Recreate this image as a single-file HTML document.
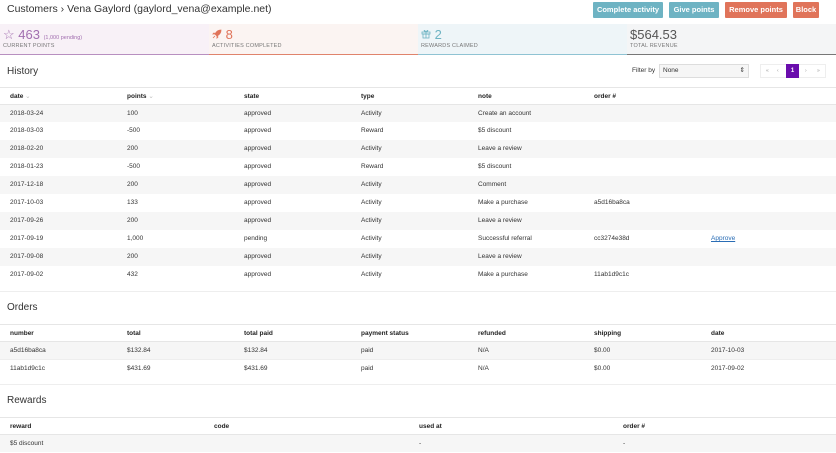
<!DOCTYPE html>
<html><head><meta charset="utf-8"><style>
*{box-sizing:border-box;margin:0;padding:0}
body{width:836px;height:452px;overflow:hidden;background:#fff;font-family:"Liberation Sans",sans-serif;color:#333;position:relative}
.abs{position:absolute}
.title{left:7px;top:3px;font-size:10.5px;color:#333}
.btn{position:absolute;top:2px;height:16px;font-size:7.5px;color:#fff;text-align:center;line-height:16px;font-weight:bold;border-radius:1px}
.teal{background:#6eb3c3}.red{background:#e0745a}
.stat{position:absolute;top:24px;height:31px;width:209px;padding-left:3px}
.stat .v{font-size:13px;margin-top:3px;height:15px;line-height:15px}
.stat .l{font-size:5.5px;color:#777;letter-spacing:.2px;margin-top:1px}
h2{position:absolute;left:7px;font-size:10px;font-weight:normal;color:#333}
.row{position:absolute;left:0;width:836px;height:18px;font-size:6.5px;line-height:18px}
.row span{position:absolute}
.hd{border-top:1px solid #e6e6e6;font-weight:bold;color:#222}
.g{background:#f6f6f6}
.sep{position:absolute;left:0;width:836px;border-top:1px solid #eee}
</style></head><body>
<div class="abs title">Customers › Vena Gaylord (gaylord_vena@example.net)</div>
<div class="btn teal" style="left:593px;width:70px">Complete activity</div>
<div class="btn teal" style="left:669px;width:50px">Give points</div>
<div class="btn red" style="left:725px;width:62px">Remove points</div>
<div class="btn red" style="left:793px;width:26px">Block</div>

<div class="stat" style="left:0;background:#f8f1f7;border-bottom:1px solid #b88fc0"><div class="v" style="color:#a26fb0">☆ 463 <span style="font-size:5.5px">(1,000 pending)</span></div><div class="l">CURRENT POINTS</div></div>
<div class="stat" style="left:209px;background:#fbf4f2;border-bottom:1px solid #e0836c"><div class="v" style="color:#e0745a"><svg width="10" height="10" viewBox="0 0 10 10"><path d="M9 1C6 1 4 3 3 5L5 7C7 6 9 4 9 1ZM3 5L1 5L2 4ZM5 7L5 9L6 8ZM3 7L1 9" fill="#e0745a" stroke="#e0745a" stroke-width=".8"/></svg> 8</div><div class="l">ACTIVITIES COMPLETED</div></div>
<div class="stat" style="left:418px;background:#eef5f8;border-bottom:1px solid #8fc3d3"><div class="v" style="color:#6eb3c3"><svg width="10" height="10" viewBox="0 0 10 10" fill="none" stroke="#6eb3c3" stroke-width=".8"><rect x="1" y="3" width="8" height="2"/><rect x="2" y="5" width="6" height="4"/><path d="M5 3V9M5 3C3 0 2 2 5 3C8 2 7 0 5 3"/></svg> 2</div><div class="l">REWARDS CLAIMED</div></div>
<div class="stat" style="left:627px;background:#f4f5f6;border-bottom:1px solid #777"><div class="v" style="color:#555">$564.53</div><div class="l">TOTAL REVENUE</div></div>

<h2 style="top:66px">History</h2>
<div class="abs" style="left:632px;top:67px;font-size:6.5px">Filter by</div>
<div class="abs" style="left:659px;top:64px;width:90px;height:14px;border:1px solid #ddd;background:#f6f6f6;font-size:6.5px;line-height:12px;padding-left:3px">None<span style="position:absolute;right:3px">⇕</span></div>
<div class="abs" style="left:760px;top:64px;width:66px;height:14px;border:1px solid #eee;font-size:5px;color:#999;line-height:13px">
<span class="abs" style="left:5px">«</span><span class="abs" style="left:16px">‹</span><span class="abs" style="left:25px;width:13px;height:14px;top:-1px;background:#6a0dad;color:#fff;text-align:center;font-size:6px;line-height:14px;font-weight:bold">1</span><span class="abs" style="left:44px">›</span><span class="abs" style="left:56px">»</span></div>

<div class="row hd" style="top:87px"><span style="left:10px">date <b style="color:#bbb;font-weight:normal">⌄</b></span><span style="left:127px">points <b style="color:#bbb;font-weight:normal">⌄</b></span><span style="left:244px">state</span><span style="left:361px">type</span><span style="left:478px">note</span><span style="left:594px">order #</span></div>
<div class="row g" style="top:104px;border-top:1px solid #e6e6e6"><span style="left:10px">2018-03-24</span><span style="left:127px">100</span><span style="left:244px">approved</span><span style="left:361px">Activity</span><span style="left:478px">Create an account</span></div>
<div class="row" style="top:122px"><span style="left:10px">2018-03-03</span><span style="left:127px">-500</span><span style="left:244px">approved</span><span style="left:361px">Reward</span><span style="left:478px">$5 discount</span></div>
<div class="row g" style="top:140px"><span style="left:10px">2018-02-20</span><span style="left:127px">200</span><span style="left:244px">approved</span><span style="left:361px">Activity</span><span style="left:478px">Leave a review</span></div>
<div class="row" style="top:158px"><span style="left:10px">2018-01-23</span><span style="left:127px">-500</span><span style="left:244px">approved</span><span style="left:361px">Reward</span><span style="left:478px">$5 discount</span></div>
<div class="row g" style="top:176px"><span style="left:10px">2017-12-18</span><span style="left:127px">200</span><span style="left:244px">approved</span><span style="left:361px">Activity</span><span style="left:478px">Comment</span></div>
<div class="row" style="top:194px"><span style="left:10px">2017-10-03</span><span style="left:127px">133</span><span style="left:244px">approved</span><span style="left:361px">Activity</span><span style="left:478px">Make a purchase</span><span style="left:594px">a5d16ba8ca</span></div>
<div class="row g" style="top:212px"><span style="left:10px">2017-09-26</span><span style="left:127px">200</span><span style="left:244px">approved</span><span style="left:361px">Activity</span><span style="left:478px">Leave a review</span></div>
<div class="row" style="top:230px"><span style="left:10px">2017-09-19</span><span style="left:127px">1,000</span><span style="left:244px">pending</span><span style="left:361px">Activity</span><span style="left:478px">Successful referral</span><span style="left:594px">cc3274e38d</span><span style="left:711px;color:#2a6db5;text-decoration:underline">Approve</span></div>
<div class="row g" style="top:248px"><span style="left:10px">2017-09-08</span><span style="left:127px">200</span><span style="left:244px">approved</span><span style="left:361px">Activity</span><span style="left:478px">Leave a review</span></div>
<div class="row" style="top:266px"><span style="left:10px">2017-09-02</span><span style="left:127px">432</span><span style="left:244px">approved</span><span style="left:361px">Activity</span><span style="left:478px">Make a purchase</span><span style="left:594px">11ab1d9c1c</span></div>
<div class="sep" style="top:291px"></div>

<h2 style="top:302px">Orders</h2>
<div class="row hd" style="top:324px"><span style="left:10px">number</span><span style="left:127px">total</span><span style="left:244px">total paid</span><span style="left:361px">payment status</span><span style="left:478px">refunded</span><span style="left:594px">shipping</span><span style="left:711px">date</span></div>
<div class="row g" style="top:341px;border-top:1px solid #e6e6e6"><span style="left:10px">a5d16ba8ca</span><span style="left:127px">$132.84</span><span style="left:244px">$132.84</span><span style="left:361px">paid</span><span style="left:478px">N/A</span><span style="left:594px">$0.00</span><span style="left:711px">2017-10-03</span></div>
<div class="row" style="top:359px;border-top:1px solid #eee"><span style="left:10px">11ab1d9c1c</span><span style="left:127px">$431.69</span><span style="left:244px">$431.69</span><span style="left:361px">paid</span><span style="left:478px">N/A</span><span style="left:594px">$0.00</span><span style="left:711px">2017-09-02</span></div>
<div class="sep" style="top:384px"></div>

<h2 style="top:395px">Rewards</h2>
<div class="row hd" style="top:417px"><span style="left:10px">reward</span><span style="left:214px">code</span><span style="left:419px">used at</span><span style="left:623px">order #</span></div>
<div class="row g" style="top:434px;border-top:1px solid #e6e6e6"><span style="left:10px">$5 discount</span><span style="left:419px">-</span><span style="left:623px">-</span></div>
</body></html>
